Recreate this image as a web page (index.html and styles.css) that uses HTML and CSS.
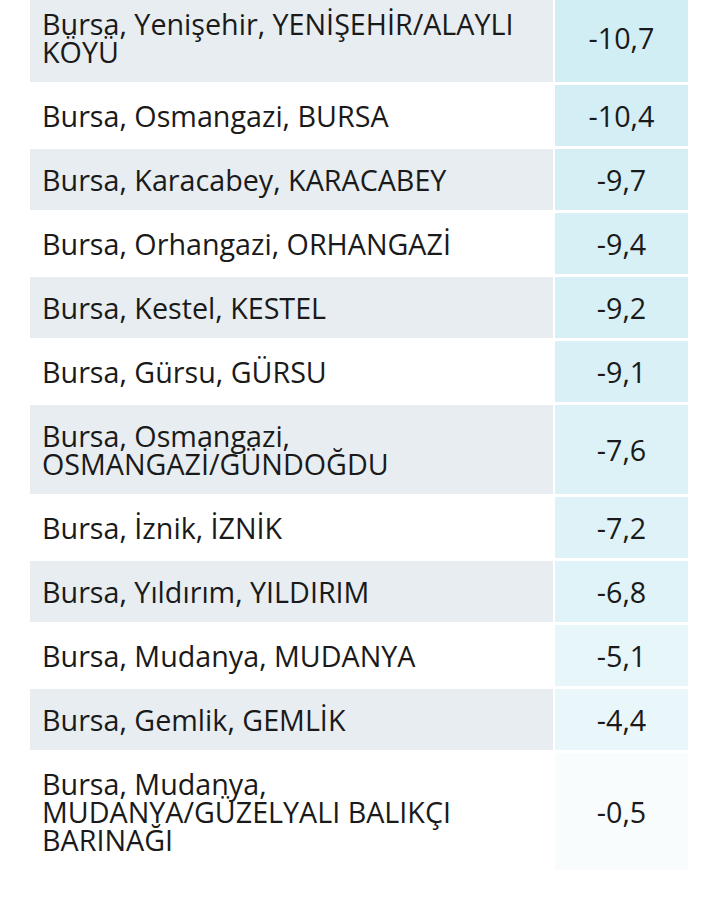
FILE: index.html
```html
<!DOCTYPE html>
<html lang="tr">
<head>
<meta charset="utf-8">
<link rel="stylesheet" href="styles.css">
</head>
<body>
<div class="wrap">
<table class="temps">
<tbody>
<tr><td class="place">Bursa, Yenişehir, YENİŞEHİR/ALAYLI KÖYÜ</td><td class="val" style="background: rgba(125,205,225,0.35)">-10,7</td></tr>
<tr><td class="place">Bursa, Osmangazi, BURSA</td><td class="val" style="background: rgba(125,205,225,0.34)">-10,4</td></tr>
<tr><td class="place">Bursa, Karacabey, KARACABEY</td><td class="val" style="background: rgba(125,205,225,0.32)">-9,7</td></tr>
<tr><td class="place">Bursa, Orhangazi, ORHANGAZİ</td><td class="val" style="background: rgba(125,205,225,0.31)">-9,4</td></tr>
<tr><td class="place">Bursa, Kestel, KESTEL</td><td class="val" style="background: rgba(125,205,225,0.305)">-9,2</td></tr>
<tr><td class="place">Bursa, Gürsu, GÜRSU</td><td class="val" style="background: rgba(125,205,225,0.30)">-9,1</td></tr>
<tr><td class="place">Bursa, Osmangazi, OSMANGAZİ/GÜNDOĞDU</td><td class="val" style="background: rgba(125,205,225,0.26)">-7,6</td></tr>
<tr><td class="place">Bursa, İznik, İZNİK</td><td class="val" style="background: rgba(125,205,225,0.25)">-7,2</td></tr>
<tr><td class="place">Bursa, Yıldırım, YILDIRIM</td><td class="val" style="background: rgba(125,205,225,0.235)">-6,8</td></tr>
<tr><td class="place">Bursa, Mudanya, MUDANYA</td><td class="val" style="background: rgba(125,205,225,0.19)">-5,1</td></tr>
<tr><td class="place">Bursa, Gemlik, GEMLİK</td><td class="val" style="background: rgba(125,205,225,0.165)">-4,4</td></tr>
<tr><td class="place">Bursa, Mudanya, MUDANYA/GÜZELYALI BALIKÇI BARINAĞI</td><td class="val" style="background: rgba(125,205,225,0.05)">-0,5</td></tr>
</tbody>
</table>
</div>
</body>
</html>
```

FILE: styles.css
```css
html, body {
  margin: 0;
  padding: 0;
  background: #ffffff;
}

body {
  font-family: "Open Sans", "Noto Sans", "DejaVu Sans", sans-serif;
  color: #1a1a1a;
}

.wrap {
  padding: 0 30px 0 28px;
  margin-top: -10px;
}

.temps {
  border-collapse: separate;
  border-spacing: 2px 3px;
  width: 662px;
}

.temps td {
  font-size: 28.7px;
  font-weight: 400;
  line-height: 28px;
  padding: 17px 12px 16px 12px;
  vertical-align: middle;
}

.temps tr:nth-child(odd) .place {
  background: #e7edf1;
}

.temps tr:nth-child(even) .place {
  background: #ffffff;
}

.place {
  width: 499px;
  text-align: left;
}

.val {
  text-align: center;
  padding-left: 4px;
  padding-right: 4px;
}
```
